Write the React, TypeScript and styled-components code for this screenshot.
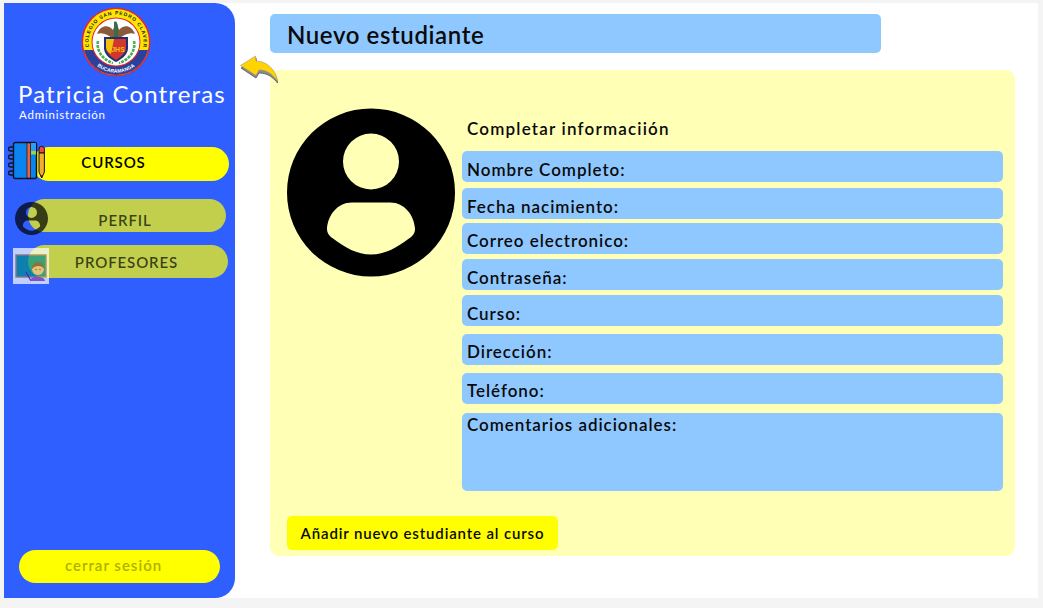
import React from "react";
import styled, { createGlobalStyle } from "styled-components";

const Global = createGlobalStyle`
  html, body {
    margin: 0;
    padding: 0;
    background: #f4f4f4;
    font-family: "Lato", "Liberation Sans", sans-serif;
  }
`;

const Logo = () => (
  <LogoSvg viewBox="0 0 70 70">
    <circle cx="35" cy="35" r="34.5" fill="#e8262a" />
    <circle cx="35" cy="35" r="33" fill="#ffe600" />
    <path d="M3 43 A33 33 0 0 0 67 43 Z" fill="#2b3f9c" />
    <circle cx="35" cy="35" r="24.500" fill="#e8262a" />
    <circle cx="35" cy="35" r="23.500" fill="#fff" />
    <defs>
      <path id="arcTop" d="M8.400 42.100 A27.500 27.500 0 1 1 61.600 42.100" />
      <path id="arcBottom" d="M11 54 A30.500 30.500 0 0 0 59 54" />
    </defs>
    <LogoText fill="#222" textLength="96">
      <textPath href="#arcTop" startOffset="50%" textAnchor="middle">COLEGIO SAN PEDRO CLAVER</textPath>
    </LogoText>
    <LogoText fill="#fff">
      <textPath href="#arcBottom" startOffset="50%" textAnchor="middle">BUCARAMANGA</textPath>
    </LogoText>
    <path d="M17 34 C15 44 22 53 32 56 M53 34 C55 44 48 53 38 56" fill="none" stroke="#4caf50" strokeWidth="2.600" strokeDasharray="3 1" />
    <path d="M16 27 C20 17 28 18 32 23 L35 14 L38 23 C42 18 50 17 54 27 C48 25 43 28 39 31 L31 31 C27 28 22 25 16 27 Z" fill="#8a5a3a" />
    <path d="M33 15 C36 13 38 18 37 31 L33 31 Z" fill="#3c6b4a" />
    <path d="M23 30 L47 30 L47 42 C46 49 39 53 35 55 C31 53 24 49 23 42 Z" fill="#1f2f7a" />
    <path d="M25 32 L45 32 L45 42 C44 47 38 51 35 53 C32 51 26 47 25 42 Z" fill="#d3362a" />
    <path d="M25 32 L33 32 L30 47 C27 45 25 43 25 40 Z" fill="#f4c20d" />
    <JhsText x="37" y="45">JHS</JhsText>
  </LogoSvg>
);

const NotebookIcon = () => (
  <svg width="38" height="40" viewBox="0 0 38 40">
    <rect x="5.500" y="1.500" width="23" height="36" rx="2" fill="#0a84f0" stroke="#10131c" strokeWidth="1.400" />
    <rect x="19" y="2" width="3.500" height="35" fill="#f0633a" stroke="#10131c" strokeWidth="0.700" />
    <rect x="23" y="2" width="5" height="8" fill="#2a9df4" />
    <rect x="23" y="10" width="5" height="3.500" fill="#9bd43c" />
    <path d="M5 6 H2.500 A2 2 0 0 0 2.500 10 H5 M5 14 H2.500 A2 2 0 0 0 2.500 18 H5 M5 22 H2.500 A2 2 0 0 0 2.500 26 H5 M5 30 H2.500 A2 2 0 0 0 2.500 34 H5" fill="none" stroke="#10131c" strokeWidth="1.300" />
    <path d="M31 8 A2.700 2.700 0 0 1 36.400 8 V12 H31 Z" fill="#ef4b3e" stroke="#10131c" strokeWidth="1" />
    <path d="M31 12 H36.400 V31 L33.700 37 L31 31 Z" fill="#f5ab2c" stroke="#10131c" strokeWidth="1" />
    <path d="M32.500 34.500 L33.700 37 L34.900 34.500 Z" fill="#10131c" />
  </svg>
);

const PersonIcon = () => (
  <svg width="100%" height="100%" viewBox="0 0 168 168">
    <path
      fillRule="evenodd"
      fill="#000"
      d="M84 0 A84 84 0 1 0 84 168 A84 84 0 1 0 84 0 Z M84 25 A28 28 0 1 0 84 81 A28 28 0 1 0 84 25 Z M65 94 H103 C118 94 127 107 128 120 C128 125 126 127 122 130 C110 139 98 146 84 146 C70 146 58 139 46 130 C42 127 40 125 40 120 C41 107 50 94 65 94 Z"
    />
  </svg>
);

const TeacherIcon = () => (
  <svg width="36" height="36" viewBox="0 0 36 36">
    <rect width="36" height="36" fill="#fff" />
    <rect x="3" y="7" width="30" height="22" fill="#008f90" stroke="#a88050" strokeWidth="1.400" />
    <path d="M13 24 L18 33" stroke="#5a109a" strokeWidth="1.300" />
    <path d="M17 33 C18 27 31 27 32 33 Z" fill="#a050a8" />
    <circle cx="25" cy="21" r="6" fill="#f2bf90" />
    <path d="M19 21 C18 12 32 12 31 21 C29 17 22 17 19 21 Z" fill="#7a4a2a" />
    <circle cx="23" cy="21.500" r="0.700" fill="#333" />
    <circle cx="27" cy="21.500" r="0.700" fill="#333" />
  </svg>
);

const BackArrow = () => (
  <ArrowSvg viewBox="0 0 39 30">
    <path d="M1 13 L16 3 L16.500 8 C27 8 36.500 17 37.500 28 C33 22 27 18 19 18 L16 23 Z" fill="#8b8b8b" stroke="#555" strokeWidth="0.800" />
    <path d="M0.500 10.500 L15.500 1 L16 6 C27 6 36 15 37.500 26 C33 20 27 14.500 19 15 L16 20.500 Z" fill="#ffd400" stroke="#8a8a8a" strokeWidth="0.500" />
  </ArrowSvg>
);

const fields = [
  { label: "Nombre Completo:", gap: 0, top: 8 },
  { label: "Fecha nacimiento:", gap: 6, top: 8 },
  { label: "Correo electronico:", gap: 4, top: 7 },
  { label: "Contraseña:", gap: 5, top: 8 },
  { label: "Curso:", gap: 5, top: 8 },
  { label: "Dirección:", gap: 8, top: 7 },
  { label: "Teléfono:", gap: 8, top: 7 },
  { label: "Comentarios adicionales:", gap: 9, top: 1, tall: true },
];

const App = () => {
  return (
    <>
      <Global />
      <Frame>
        <Sidebar>
          <Logo />
          <UserName>Patricia Contreras</UserName>
          <UserRole>Administración</UserRole>
          <Nav>
            <CoursesRow>
              <NotebookSlot>
                <NotebookIcon />
              </NotebookSlot>
              <CoursesPill>CURSOS</CoursesPill>
            </CoursesRow>
            <ProfileRow>
              <MutedPill $right={4} $down={8}>PERFIL</MutedPill>
              <ProfileAvatar>
                <PersonIcon />
              </ProfileAvatar>
            </ProfileRow>
            <TeachersRow>
              <MutedPill $right={3} $down={1}>PROFESORES</MutedPill>
              <TeacherSlot>
                <TeacherIcon />
              </TeacherSlot>
            </TeachersRow>
          </Nav>
          <Logout>cerrar sesión</Logout>
        </Sidebar>
        <Main>
          <TitleBar>Nuevo estudiante</TitleBar>
          <BackLink>
            <BackArrow />
          </BackLink>
          <Card>
            <CardBody>
              <BigAvatar>
                <PersonIcon />
              </BigAvatar>
              <Form>
                <FormTitle>Completar informaciión</FormTitle>
                {fields.map((f) => (
                  <Field key={f.label} $gap={f.gap} $top={f.top} $tall={!!f.tall}>
                    {f.label}
                  </Field>
                ))}
              </Form>
            </CardBody>
            <AddButton>Añadir nuevo estudiante al curso</AddButton>
          </Card>
        </Main>
      </Frame>
    </>
  );
};

export default App;

const Frame = styled.div`
  display: flex;
  width: 1034px;
  height: 595px;
  margin: 3px 0 0 4px;
  background: #ffffff;
`;

const Sidebar = styled.aside`
  display: flex;
  flex-direction: column;
  flex: none;
  box-sizing: border-box;
  width: 231px;
  height: 595px;
  padding: 4px 0 15px;
  background: #2f5fff;
  border-radius: 0 20px 20px 0;
`;

const LogoSvg = styled.svg`
  flex: none;
  width: 70px;
  height: 70px;
  margin-left: 77px;
`;

const LogoText = styled.text`
  font-family: "Liberation Sans", sans-serif;
  font-size: 5px;
  font-weight: 700;
`;

const JhsText = styled.text`
  font-family: "Liberation Sans", sans-serif;
  font-size: 7px;
  font-weight: 700;
  fill: #f4c20d;
  text-anchor: middle;
`;

const UserName = styled.div`
  margin: 2px 0 0 14px;
  color: #ffffff;
  font-size: 24px;
  line-height: 30px;
  letter-spacing: 1.15px;
  white-space: nowrap;
`;

const UserRole = styled.div`
  margin: -1px 0 0 15px;
  color: #ffffff;
  font-size: 11.5px;
  line-height: 14px;
  letter-spacing: 0.8px;
`;

const Nav = styled.nav`
  display: flex;
  flex-direction: column;
  margin-top: 25px;
`;

const Row = styled.div`
  position: relative;
  display: flex;
  box-sizing: border-box;
`;

const CoursesRow = styled(Row)`
  padding: 0 6px 0 28px;
`;

const ProfileRow = styled(Row)`
  margin-top: 18px;
  padding: 0 9px 0 24px;
`;

const TeachersRow = styled(Row)`
  margin-top: 13px;
  padding: 0 7px 0 24px;
`;

const Pill = styled.div`
  display: flex;
  flex: 1;
  align-items: center;
  justify-content: center;
  box-sizing: border-box;
  height: 33px;
  border-radius: 17px;
  font-size: 15px;
  font-weight: 600;
  letter-spacing: 0.9px;
`;

const CoursesPill = styled(Pill)`
  height: 34px;
  padding: 0 34px 4px 0;
  background: #ffff00;
  color: #000000;
`;

const MutedPill = styled(Pill)<{ $right: number; $down: number }>`
  padding-right: ${(p) => p.$right}px;
  padding-top: ${(p) => p.$down}px;
  background: rgba(255, 255, 0, 0.7);
  color: rgba(0, 0, 0, 0.7);
`;

const NotebookSlot = styled.div`
  position: absolute;
  top: -6px;
  left: 4px;
  z-index: 1;
`;

const ProfileAvatar = styled.div`
  position: absolute;
  top: 3px;
  left: 11px;
  width: 33px;
  height: 33px;
  opacity: 0.7;
`;

const TeacherSlot = styled.div`
  position: absolute;
  top: 3px;
  left: 9px;
  opacity: 0.7;
`;

const Logout = styled.div`
  display: flex;
  align-items: center;
  justify-content: center;
  height: 33px;
  margin: auto 15px 0;
  padding: 0 12px 3px 0;
  box-sizing: border-box;
  background: #ffff00;
  border-radius: 17px;
  color: #aeb000;
  font-size: 15px;
  font-weight: 600;
  letter-spacing: 1px;
`;

const Main = styled.main`
  position: relative;
  display: flex;
  flex: 1;
  flex-direction: column;
  box-sizing: border-box;
  padding: 11px 23px 0 35px;
`;

const TitleBar = styled.h1`
  display: flex;
  align-items: center;
  box-sizing: border-box;
  width: 611px;
  height: 39px;
  margin: 0;
  padding: 1px 0 0 17px;
  background: #8fc8ff;
  border-radius: 5px;
  color: #0a0a0a;
  font-size: 24px;
  font-weight: 600;
  letter-spacing: 0.6px;
`;

const BackLink = styled.div`
  position: absolute;
  top: 52px;
  left: 5px;
  z-index: 1;
`;

const ArrowSvg = styled.svg`
  display: block;
  width: 39px;
  height: 30px;
`;

const Card = styled.section`
  display: flex;
  flex-direction: column;
  box-sizing: border-box;
  height: 486px;
  margin-top: 17px;
  padding: 38px 12px 6px 17px;
  background: #ffffb5;
  border-radius: 9px;
`;

const CardBody = styled.div`
  display: flex;
  flex: 1;
  gap: 7px;
`;

const BigAvatar = styled.div`
  flex: none;
  width: 168px;
  height: 169px;
`;

const Form = styled.div`
  display: flex;
  flex: 1;
  flex-direction: column;
`;

const FormTitle = styled.div`
  height: 43px;
  padding: 11px 0 0 5px;
  box-sizing: border-box;
  color: #0a0a0a;
  font-size: 17px;
  line-height: 20px;
  font-weight: 600;
  letter-spacing: 1.2px;
`;

const Field = styled.div<{ $gap: number; $top: number; $tall: boolean }>`
  box-sizing: border-box;
  height: ${(p) => (p.$tall ? "78px" : "31px")};
  margin-top: ${(p) => p.$gap}px;
  padding: ${(p) => p.$top}px 5px 0;
  background: #8fc8ff;
  border-radius: 5px;
  color: #0a0a0a;
  font-size: 17px;
  line-height: 21px;
  font-weight: 600;
  letter-spacing: 0.95px;
`;

const AddButton = styled.div`
  display: flex;
  align-items: center;
  justify-content: center;
  width: 271px;
  height: 34px;
  background: #ffff00;
  border-radius: 5px;
  color: #0a0a0a;
  font-size: 15px;
  font-weight: 600;
  letter-spacing: 0.85px;
`;
